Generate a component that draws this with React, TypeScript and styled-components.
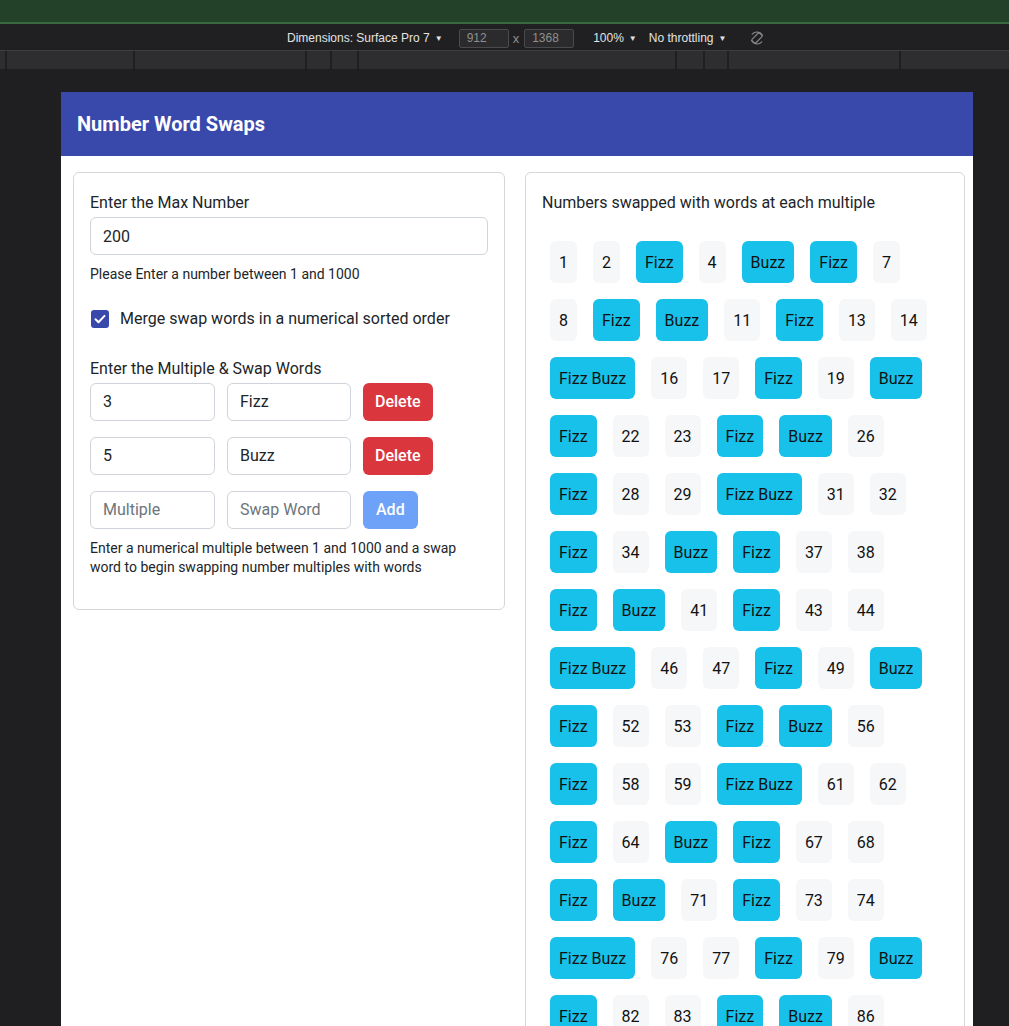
import React from "react";
import styled, { createGlobalStyle } from "styled-components";

const GlobalStyle = createGlobalStyle`
  html, body {
    margin: 0;
    padding: 0;
    background: #1f1f21;
    overflow: hidden;
  }
  body {
    font-family: Roboto, "Noto Sans", "Liberation Sans", sans-serif;
  }
  * {
    box-sizing: border-box;
  }
`;

/* ---------- devtools chrome ---------- */

const GreenStrip = styled.div`
  height: 24px;
  background: #234028;
  border-bottom: 2px solid #3a6a40;
`;

const Toolbar = styled.div`
  height: 27px;
  background: #202022;
  border-bottom: 1px solid #3d3d3f;
  display: flex;
  align-items: center;
  padding: 2px 0 0 287px;
  font-family: "Liberation Sans", Arial, sans-serif;
  font-size: 12px;
  color: #e3e3e3;
`;

const ToolText = styled.span<{ $gap?: number; $left?: number }>`
  display: inline-flex;
  align-items: center;
  margin-right: ${(p) => p.$gap ?? 0}px;
  margin-left: ${(p) => p.$left ?? 0}px;
  white-space: nowrap;
`;

const Caret = styled.span`
  font-size: 8px;
  margin-left: 5px;
`;

const SizeBox = styled.span`
  display: inline-flex;
  align-items: center;
  width: 50px;
  height: 19px;
  padding-left: 7px;
  background: #2b2b2d;
  border: 1px solid #4a4a4c;
  border-radius: 2px;
  color: #8f8f8f;
`;

const Times = styled.span`
  color: #8f8f8f;
  margin: 0 5px 0 4px;
  font-size: 13px;
`;

const Ruler = styled.div`
  height: 19px;
  display: flex;
  background: #1f1f21;
  padding-bottom: 1px;
`;

const RulerSeg = styled.div<{ $w?: number }>`
  height: 100%;
  background: #2e2e31;
  margin-right: 2px;
  ${(p) => (p.$w ? `width: ${p.$w}px;` : "flex: 1; margin-right: 0;")}
`;

const Stage = styled.div`
  padding: 22px 0 0 61px;
`;

/* ---------- emulated page ---------- */

const Page = styled.div`
  width: 912px;
  background: #ffffff;
  color: #212529;
`;

const Header = styled.header`
  height: 64px;
  background: #3949ab;
  display: flex;
  align-items: center;
  padding-left: 16px;
`;

const Title = styled.h1`
  margin: 0;
  color: #ffffff;
  font-size: 20px;
  font-weight: 700;
`;

const Columns = styled.div`
  display: grid;
  grid-template-columns: 432px 440px;
  column-gap: 20px;
  align-items: start;
  padding: 16px 12px 0;
`;

const Card = styled.section`
  border: 1px solid #d6d6d6;
  border-radius: 6px;
  padding: 18px 16px 31px;
`;

const Label = styled.div<{ $top?: number }>`
  font-size: 16px;
  line-height: 24px;
  margin-top: ${(p) => p.$top ?? 0}px;
`;

const Field = styled.input<{ $w?: number }>`
  display: block;
  width: ${(p) => (p.$w ? `${p.$w}px` : "100%")};
  height: 38px;
  padding: 0 12px;
  border: 1px solid #ced4da;
  border-radius: 6px;
  font-family: inherit;
  font-size: 16px;
  color: #212529;
  background: #fff;
  outline: none;
  &::placeholder {
    color: #6c757d;
  }
`;

const Help = styled.p<{ $top?: number }>`
  margin: ${(p) => p.$top ?? 10}px 0 0;
  font-size: 14px;
  line-height: 19.5px;
`;

const CheckRow = styled.label`
  display: flex;
  align-items: center;
  gap: 11px;
  margin-top: 22px;
  padding-left: 1px;
  font-size: 16px;
  line-height: 24px;
`;

const CheckBox = styled.span`
  width: 18px;
  height: 18px;
  border-radius: 3px;
  background: #3949ab;
  display: inline-flex;
  align-items: center;
  justify-content: center;
`;

const PairRow = styled.div<{ $top: number }>`
  display: flex;
  gap: 12px;
  margin-top: ${(p) => p.$top}px;
`;

const Btn = styled.button<{ $kind: "delete" | "add" }>`
  height: 38px;
  padding: 0 ${(p) => (p.$kind === "add" ? 13 : 12)}px;
  border: none;
  border-radius: 6px;
  font-family: inherit;
  font-size: 16px;
  font-weight: 500;
  color: #ffffff;
  background: ${(p) => (p.$kind === "add" ? "#6ea2f8" : "#d9363e")};
`;

const ChipWrap = styled.div`
  display: flex;
  flex-wrap: wrap;
  gap: 16px;
  padding: 8px;
  margin-top: 18px;
`;

const Chip = styled.span<{ $word: boolean }>`
  height: 42px;
  padding: 0 9px;
  display: inline-flex;
  align-items: center;
  border-radius: 6px;
  font-size: 16px;
  color: #111111;
  background: ${(p) => (p.$word ? "#17c1ea" : "#f6f7f9")};
`;

function RotateIcon() {
  return (
    <svg width="16" height="16" viewBox="0 0 16 16" fill="none">
      <path
        d="M3.2 4.2A6.4 6.4 0 0 1 13.6 5.4M12.8 11.8A6.4 6.4 0 0 1 2.4 10.6"
        stroke="#8a8a8a"
        strokeWidth="1.1"
        strokeLinecap="round"
      />
      <rect
        x="5.4"
        y="2.6"
        width="5.2"
        height="10.8"
        rx="1.3"
        transform="rotate(45 8 8)"
        stroke="#8a8a8a"
        strokeWidth="1.1"
      />
    </svg>
  );
}

const rules = [
  { multiple: 3, word: "Fizz" },
  { multiple: 5, word: "Buzz" },
];

const rulerWidths = [5, 126, 170, 23, 25, 316, 26, 22, 170];

export default function App() {
  const items = Array.from({ length: 200 }, (_, i) => {
    const n = i + 1;
    const words = rules.filter((r) => n % r.multiple === 0).map((r) => r.word);
    return words.length ? { text: words.join(" "), word: true } : { text: String(n), word: false };
  });

  return (
    <>
      <GlobalStyle />
      <GreenStrip />
      <Toolbar>
        <ToolText $gap={16}>
          Dimensions: Surface Pro 7<Caret>▼</Caret>
        </ToolText>
        <SizeBox>912</SizeBox>
        <Times>x</Times>
        <SizeBox>1368</SizeBox>
        <ToolText $gap={12} $left={19}>
          100%<Caret>▼</Caret>
        </ToolText>
        <ToolText $gap={23}>
          No throttling<Caret>▼</Caret>
        </ToolText>
        <RotateIcon />
      </Toolbar>
      <Ruler>
        {rulerWidths.map((w, i) => (
          <RulerSeg key={i} $w={w} />
        ))}
        <RulerSeg />
      </Ruler>

      <Stage>
        <Page>
          <Header>
            <Title>Number Word Swaps</Title>
          </Header>
          <Columns>
            <Card>
              <Label>Enter the Max Number</Label>
              <Field defaultValue="200" style={{ marginTop: 2 }} />
              <Help>Please Enter a number between 1 and 1000</Help>

              <CheckRow>
                <CheckBox>
                  <svg width="14" height="14" viewBox="0 0 14 14" fill="none">
                    <path
                      d="M2.5 7.3l3 2.9 6-6.3"
                      stroke="#ffffff"
                      strokeWidth="2"
                      strokeLinecap="round"
                      strokeLinejoin="round"
                    />
                  </svg>
                </CheckBox>
                Merge swap words in a numerical sorted order
              </CheckRow>

              <Label $top={26}>Enter the Multiple &amp; Swap Words</Label>
              {rules.map((r, i) => (
                <PairRow key={r.word} $top={i === 0 ? 2 : 16}>
                  <Field $w={125} defaultValue={String(r.multiple)} />
                  <Field $w={124} defaultValue={r.word} />
                  <Btn $kind="delete">Delete</Btn>
                </PairRow>
              ))}
              <PairRow $top={16}>
                <Field $w={125} placeholder="Multiple" />
                <Field $w={124} placeholder="Swap Word" />
                <Btn $kind="add">Add</Btn>
              </PairRow>
              <Help>
                Enter a numerical multiple between 1 and 1000 and a swap word to begin swapping
                number multiples with words
              </Help>
            </Card>

            <Card>
              <Label>Numbers swapped with words at each multiple</Label>
              <ChipWrap>
                {items.map((it, i) => (
                  <Chip key={i} $word={it.word}>
                    {it.text}
                  </Chip>
                ))}
              </ChipWrap>
            </Card>
          </Columns>
        </Page>
      </Stage>
    </>
  );
}
